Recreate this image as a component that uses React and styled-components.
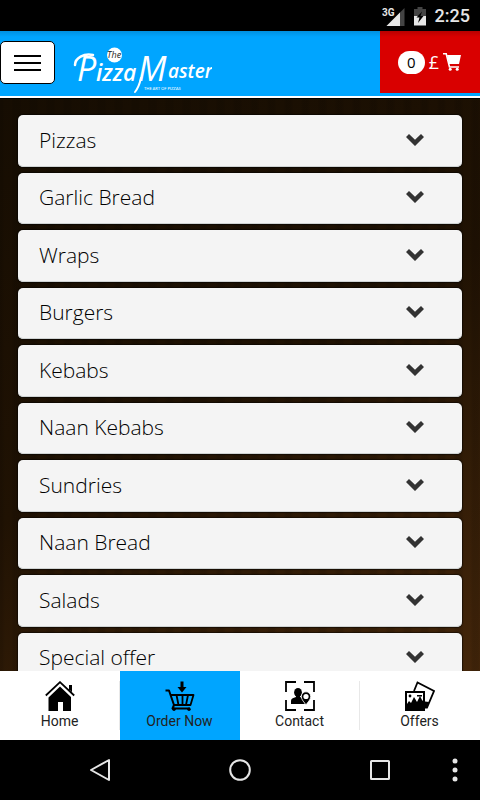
import React from 'react'
import styled, { createGlobalStyle } from 'styled-components'

const categories = [
  'Pizzas',
  'Garlic Bread',
  'Wraps',
  'Burgers',
  'Kebabs',
  'Naan Kebabs',
  'Sundries',
  'Naan Bread',
  'Salads',
  'Special offer',
]

const tabs = [
  { label: 'Home', Icon: HomeIcon },
  { label: 'Order Now', Icon: OrderIcon, active: true },
  { label: 'Contact', Icon: ContactIcon },
  { label: 'Offers', Icon: OffersIcon },
]

function App() {
  return (
    <Screen>
      <GlobalStyle />
      <StatusBar>
        <SignalIcon />
        <BatteryIcon />
        <Clock>2:25</Clock>
      </StatusBar>
      <Header>
        <MenuButton type="button" aria-label="Menu">
          <span />
          <span />
          <span />
        </MenuButton>
        <Brand href="#home" aria-label="The Pizza Master">
          <Logo />
        </Brand>
        <Basket type="button" aria-label="Basket">
          <Count>0</Count>
          <span>£</span>
          <CartIcon />
        </Basket>
      </Header>
      <Content>
        <List>
          {categories.map((name) => (
            <Category key={name} type="button" aria-expanded="false">
              {name}
              <ChevronIcon />
            </Category>
          ))}
        </List>
      </Content>
      <TabBar>
        {tabs.map(({ label, Icon, active }) => (
          <Tab key={label} href="#tab" $active={active}>
            <Icon />
            {label}
          </Tab>
        ))}
      </TabBar>
      <SystemBar>
        <SystemButtons>
          <SystemButton type="button" aria-label="Back">
            <svg width="24" height="24" viewBox="0 0 24 24">
              <path d="M21 2v20L3 12z" fill="none" stroke="#e6e6e6" strokeWidth="2" strokeLinejoin="round" />
            </svg>
          </SystemButton>
          <SystemButton type="button" aria-label="Home">
            <svg width="24" height="24" viewBox="0 0 24 24">
              <circle cx="12" cy="12" r="9.8" fill="none" stroke="#e6e6e6" strokeWidth="2" />
            </svg>
          </SystemButton>
          <SystemButton type="button" aria-label="Recent apps">
            <svg width="24" height="24" viewBox="0 0 24 24">
              <rect x="3" y="3" width="18" height="18" rx="0.5" fill="none" stroke="#e6e6e6" strokeWidth="2" />
            </svg>
          </SystemButton>
        </SystemButtons>
        <MoreButton type="button" aria-label="More">
          <svg width="6" height="24" viewBox="0 0 6 24" fill="#e6e6e6">
            <circle cx="3" cy="3" r="2.5" />
            <circle cx="3" cy="12" r="2.5" />
            <circle cx="3" cy="21" r="2.5" />
          </svg>
        </MoreButton>
      </SystemBar>
    </Screen>
  )
}

function SignalIcon() {
  return (
    <svg width="23" height="20" viewBox="0 0 23 20">
      <path d="M22.500 2v18H4.500z" fill="#444" />
      <path d="M18 6.500V20H4.500z" fill="#e6e6e6" />
      <text x="0" y="10" fontFamily="Roboto, sans-serif" fontSize="10" fontWeight="700" fill="#e6e6e6">3G</text>
    </svg>
  )
}

function BatteryIcon() {
  return (
    <svg width="12" height="20" viewBox="0 0 12 20">
      <path d="M3.500 1h5v2H12v7H0V3h3.500z" fill="#444" />
      <path d="M0 10h12v9.500H0z" fill="#e6e6e6" />
      <path d="M8 5.500L2.500 11.500h3L4 17l5.500-7h-3z" fill="#000" />
    </svg>
  )
}

function Logo() {
  return (
    <svg width="142" height="50" viewBox="0 0 142 50" fill="#fff" fontFamily="'Open Sans', sans-serif" fontStyle="italic">
      <circle cx="44.500" cy="11" r="7.500" />
      <text x="37" y="14" fontSize="9" fill="#222">The</text>
      <path d="M5 21C5 14 14 9 23 11" fill="none" stroke="#fff" strokeWidth="2.500" strokeLinecap="round" />
      <text y="37" fontWeight="600">
        <tspan x="7" fontSize="34" fontWeight="400">P</tspan>
        <tspan x="26" fontSize="23">izza</tspan>
        <tspan x="68" fontSize="34" fontWeight="400">M</tspan>
        <tspan x="98" y="34" fontSize="19">aster</tspan>
      </text>
      <path d="M71 34Q69 43 65 48" fill="none" stroke="#fff" strokeWidth="2" strokeLinecap="round" />
      <text x="74" y="46" fontFamily="Lato, sans-serif" fontSize="4" fontStyle="normal">THE ART OF PIZZAS</text>
    </svg>
  )
}

function CartIcon() {
  return (
    <svg width="19" height="18" viewBox="0 0 19 18" fill="#fff">
      <path d="M4 2h14L16 11H6z" />
      <path d="M0 .8h3.200L6.500 14H16" fill="none" stroke="#fff" strokeWidth="1.600" />
      <circle cx="7.200" cy="16.200" r="1.500" />
      <circle cx="14.200" cy="16.200" r="1.500" />
    </svg>
  )
}

function ChevronIcon() {
  return (
    <svg width="18" height="12" viewBox="0 0 18 12">
      <path d="M0 3L3 0l6 5.800L15 0l3 3-9 9z" fill="#333" />
    </svg>
  )
}

function HomeIcon() {
  return (
    <svg width="30" height="30" viewBox="0 0 30 30">
      <path d="M3.500 16.500L15 5.500l11 10.500v14h-8v-9h-5v9H3.500z" />
      <path d="M.8 14.500L15 1.200l14.200 13.300" fill="none" stroke="#000" strokeWidth="1.800" />
      <path d="M24 4h3v7.300l-3-3z" />
    </svg>
  )
}

function OrderIcon() {
  return (
    <svg width="30" height="30" viewBox="0 0 30 30">
      <g fill="none" stroke="#000" strokeWidth="2" strokeLinejoin="round">
        <path d="M.5 9.500h3.500L9 24 7.500 27.500H25" />
        <path d="M5.500 14H28.500L25.500 24H9M11.500 14l2 10M17.500 14v10M23 14l-2 10" strokeWidth="1.800" />
      </g>
      <path d="M15.500 .5h3V6h3l-4.500 5.500L12.500 6h3z" />
      <circle cx="9" cy="28.300" r="1.700" />
      <circle cx="24" cy="28.300" r="1.700" />
    </svg>
  )
}

function ContactIcon() {
  return (
    <svg width="30" height="30" viewBox="0 0 30 30">
      <path d="M1 11V1h10M19 1h10v10M29 19v10H19M11 29H1V19" fill="none" stroke="#000" strokeWidth="1.800" />
      <ellipse cx="13" cy="11.500" rx="3.900" ry="4.500" />
      <path d="M6 23v-3q0-2.500 3-3.200l2-.8v-2h4v2q2 .6 3 2l2 5z" />
      <path d="M21 24c-1.500-2.700-4.700-5-4.700-8.500a4.700 4.700 0 0 1 9.400 0c0 3.500-3.200 5.800-4.700 8.500z" stroke="#fff" strokeWidth=".8" />
      <circle cx="21" cy="15.500" r="2.600" fill="#fff" />
    </svg>
  )
}

function OffersIcon() {
  return (
    <svg width="30" height="30" viewBox="0 0 30 30">
      <path d="M9 10l3.500-8.500L29 10l-7 16.500h-3" fill="none" stroke="#000" strokeWidth="1.800" />
      <path d="M20 20.500l4 .5-2.500 6H20z" />
      <path d="M1 11h18v18H1z" fill="#fff" stroke="#000" strokeWidth="2" />
      <path d="M2 29v-6l2-3 2 2 3-6 3 5 3-6 2 4 2 2v8z" />
      <circle cx="5" cy="15" r="1.400" />
      <path d="M12 14h5v1.500h-5z" />
    </svg>
  )
}

const GlobalStyle = createGlobalStyle`
  * {
    box-sizing: border-box;
  }
  body {
    margin: 0;
  }
  button {
    font: inherit;
    padding: 0;
    border: 0;
    cursor: pointer;
  }
  svg {
    display: block;
    flex: none;
  }
`

const Screen = styled.div`
  height: 100vh;
  display: flex;
  flex-direction: column;
  background: #000;
  font-family: Roboto, sans-serif;
`

const StatusBar = styled.div`
  flex: none;
  display: flex;
  justify-content: flex-end;
  align-items: center;
  height: 31px;
  padding-right: 10px;
  svg {
    margin-right: 9px;
  }
`

const Clock = styled.span`
  color: #e6e6e6;
  font-size: 18px;
  font-weight: 500;
  line-height: 32px;
`

const Header = styled.header`
  flex: none;
  display: flex;
  align-items: flex-start;
  height: 67px;
  background: linear-gradient(#0090e0, #00a5ff 6px);
  border-bottom: 2px solid #fff;
`

const MenuButton = styled.button`
  display: flex;
  flex-direction: column;
  align-items: center;
  justify-content: center;
  gap: 5px;
  width: 55px;
  height: 43px;
  margin-top: 10px;
  background: #fff;
  border: 1px solid #000;
  border-radius: 5px;
  span {
    width: 27px;
    height: 2px;
    background: #000;
  }
`

const Brand = styled.a`
  margin: 13px auto 0 15px;
`

const Basket = styled.button`
  display: flex;
  align-items: center;
  justify-content: center;
  gap: 4px;
  width: 100px;
  height: 62px;
  background: linear-gradient(#b80000, #d90000 6px);
  color: #fff;
  font-family: 'Open Sans', sans-serif;
  font-size: 18px;
`

const Count = styled.span`
  width: 27px;
  border-radius: 12px;
  background: #fff;
  color: #000;
  font-size: 15px;
  line-height: 23px;
`

const Content = styled.main`
  flex: 1;
  min-height: 0;
  overflow-y: auto;
  scrollbar-width: none;
  border-top: 1px solid #000;
  background:
    repeating-linear-gradient(90deg, rgba(0, 0, 0, 0.1) 0 2px, transparent 5px 11px, rgba(0, 0, 0, 0.1) 14px 17px),
    linear-gradient(150deg, #160d02 0%, #201203 50%, #44260a 100%);
`

const List = styled.div`
  box-sizing: content-box;
  display: grid;
  grid-auto-rows: 1fr;
  gap: 6px;
  min-height: calc(100% - 3px);
  padding: 16px 18px;
`

const Category = styled.button`
  display: flex;
  align-items: center;
  justify-content: space-between;
  min-height: 51px;
  padding: 0 38px 2px 21px;
  background: #f4f4f4;
  border-radius: 5px;
  box-shadow: 0 0 1px 1px rgba(0, 0, 0, 0.5), inset 0 -1px 0 #cfd3d3;
  color: #000;
  font-family: 'Open Sans', sans-serif;
  font-size: 21px;
  font-weight: 300;
  text-align: left;
`

const TabBar = styled.nav`
  flex: none;
  display: grid;
  grid-template-columns: repeat(4, 1fr);
  height: 69px;
  background: #fff;
`

const Tab = styled.a`
  display: flex;
  flex-direction: column;
  align-items: center;
  padding: 10px 1px 0 0;
  background: ${({ $active }) => ($active ? '#00a5ff' : 'linear-gradient(#e8e8e8, #e8e8e8) right center / 1px 49px no-repeat')};
  color: #222;
  font-size: 14px;
  line-height: 20px;
  text-decoration: none;
  &:last-child {
    background: none;
  }
`

const SystemBar = styled.div`
  flex: none;
  display: flex;
  align-items: center;
  height: 60px;
  padding-left: 30px;
`

const SystemButtons = styled.div`
  flex: 1;
  display: grid;
  grid-template-columns: repeat(3, 1fr);
`

const SystemButton = styled.button`
  display: flex;
  justify-content: center;
  background: none;
`

const MoreButton = styled.button`
  display: flex;
  justify-content: center;
  width: 30px;
  padding-right: 20px;
  background: none;
`

export default App
